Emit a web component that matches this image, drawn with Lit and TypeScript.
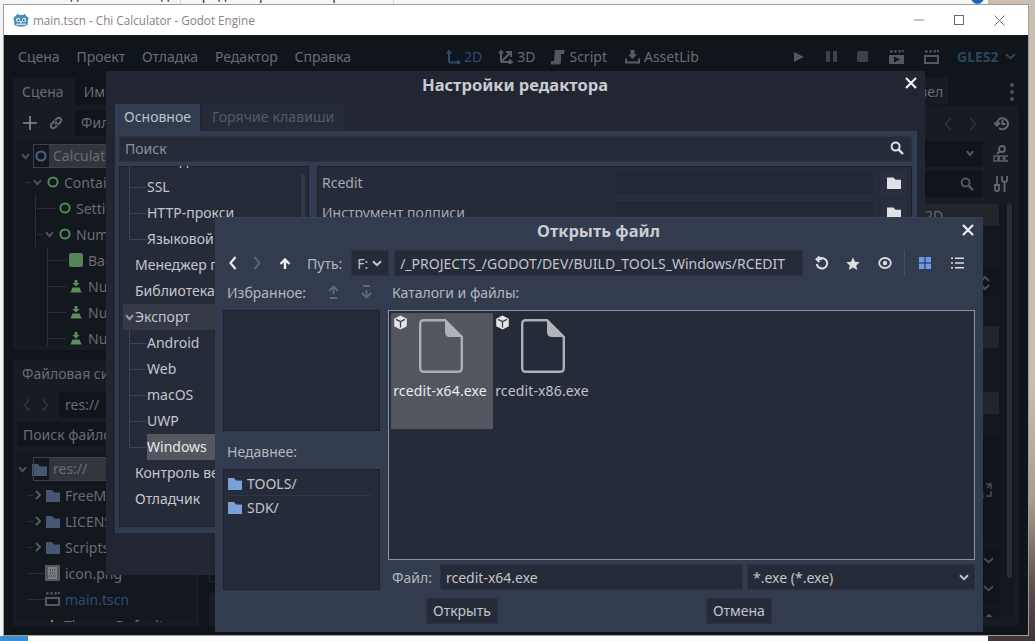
import { LitElement, html, css, svg } from "lit";
import { customElement } from "lit/decorators.js";

const icon = (w: number, h: number, body: unknown, cls = "") =>
  html`<svg class="ic ${cls}" width=${w} height=${h} viewBox="0 0 ${w} ${h}">${body}</svg>`;

const chev = (c: string, w = 10) =>
  icon(w, 7, svg`<path d="M1 1.2 L${w / 2} 5.2 L${w - 1} 1.2" fill="none" stroke=${c} stroke-width="2"/>`);
const chevUp = (c: string) =>
  icon(10, 7, svg`<path d="M1 5.8 L5 1.8 L9 5.8" fill="none" stroke=${c} stroke-width="2"/>`);
const angle = (dir: "l" | "r", c: string, sw = 2) =>
  icon(8, 14, svg`<path d=${dir === "l" ? "M6.5 1 L1.5 7 L6.5 13" : "M1.5 1 L6.5 7 L1.5 13"} fill="none" stroke=${c} stroke-width=${sw}/>`);
const tinyRight = (c: string) =>
  icon(6, 10, svg`<path d="M1 1 L5 5 L1 9" fill="none" stroke=${c} stroke-width="1.8"/>`);
const folder = (c: string) =>
  icon(14, 13, svg`<path d="M0 1 H6 L8 3.4 H14 V13 H0 Z" fill=${c}/>`);
const folderBtn = (c: string) =>
  icon(14, 12, svg`<path d="M0 .5 H6.5 L8.5 2.8 H14 V12 H0 Z" fill=${c}/>`);
const search = (c: string) =>
  icon(14, 14, svg`<circle cx="5.6" cy="5.6" r="4" fill="none" stroke=${c} stroke-width="2"/><path d="M8.6 8.6 L13 13" stroke=${c} stroke-width="2.4"/>`);
const ring = (c: string) =>
  icon(12, 12, svg`<circle cx="6" cy="6" r="4.6" fill="none" stroke=${c} stroke-width="2"/>`);
const instance = icon(12, 13, svg`<path d="M4.6 0 H7.4 V3 H9.6 L6 6.4 L2.4 3 H4.6 Z M2.5 7.5 H9.5 L11.6 12.5 H.4 Z" fill="#5c8f5e"/>`, "inst");
const greenSq = icon(14, 14, svg`<rect width="14" height="14" rx="2.5" fill="#568457"/>`, "sq");
const box = icon(15, 15, svg`<path d="M7.5 .6 L13.8 3.7 V11.2 L7.5 14.4 L1.2 11.2 V3.7 Z" fill="#e4e5e7"/><path d="M3 4.4 L7.5 6.6 L12 4.4 M7.5 6.6 V12.6" fill="none" stroke="#3a3d47" stroke-width="1.3"/>`);
const fileIc = icon(44, 54, svg`<path d="M4 1.2 H26 L42.8 18 V49 Q42.8 52.8 39 52.8 H5 Q1.2 52.8 1.2 49 V5 Q1.2 1.2 5 1.2 Z" fill="none" stroke="#aeb0b5" stroke-width="2.4"/><path d="M26 0 L44 18 H31 Q26 18 26 13 Z" fill="#b2b3b8"/>`);
const godot = icon(16, 15, svg`<path d="M3 2.5 L4.5 .8 L6 2 H10 L11.5 .8 L13 2.5 L15.6 5 L15 7.5 L14.6 12 Q8 15.5 1.4 12 L1 7.5 L.4 5 Z" fill="#478cbf"/><circle cx="5" cy="7" r="2" fill="#fff"/><circle cx="11" cy="7" r="2" fill="#fff"/><circle cx="5.2" cy="7.2" r="1" fill="#33505f"/><circle cx="10.8" cy="7.2" r="1" fill="#33505f"/><rect x="7.2" y="8" width="1.6" height="2" fill="#fff"/><path d="M3 11.2 H13" stroke="#fff" stroke-width="1"/>`);
const movie = (play: boolean) =>
  icon(15, 14, svg`<path d="M0 5 H15 V14 H0 Z" fill="#55575c"/><path d="M1 1.8 L3.6 1.2 M5.4 1.6 L7.6 1.2 M9.6 1.4 L11.8 1.2 M13 1 L14.8 .8" stroke="#55575c" stroke-width="2.4" />${play ? svg`<path d="M5 6.4 L11 9.5 L5 12.6 Z" fill="#10141b"/>` : svg`<rect x="2" y="7" width="11" height="5" fill="#10141b"/>`}`);

const sceneRows = [
  { t: "Calculator", d: 0, k: "root" },
  { t: "Container", d: 1, k: "g", arrow: true },
  { t: "SettingsBar", d: 2, k: "g" },
  { t: "NumPad", d: 2, k: "g", arrow: true },
  { t: "Background", d: 3, k: "sq" },
  { t: "NumButton", d: 3, k: "inst" },
  { t: "NumButton2", d: 3, k: "inst" },
  { t: "NumButton3", d: 3, k: "inst" },
];
const fsRows = [
  { t: "FreeMono", k: "dir" },
  { t: "LICENSES", k: "dir" },
  { t: "Scripts", k: "dir" },
  { t: "icon.png", k: "png" },
  { t: "main.tscn", k: "scn" },
  { t: "Theme_Default", k: "thm" },
];
const settingsRows = [
  { t: "Отладка", c: true },
  { t: "SSL", c: true },
  { t: "HTTP-прокси", c: true },
  { t: "Языковой сервер", c: true, last: true },
  { t: "Менеджер плагинов" },
  { t: "Библиотека ассетов" },
  { t: "Экспорт", open: true },
  { t: "Android", c: true },
  { t: "Web", c: true },
  { t: "macOS", c: true },
  { t: "UWP", c: true },
  { t: "Windows", c: true, sel: true, last: true },
  { t: "Контроль версий" },
  { t: "Отладчик" },
];

@customElement("app-root")
export class AppRoot extends LitElement {
  static styles = css`
    :host { display: block; width: 1035px; height: 641px; overflow: hidden; position: relative;
      font-family: "Noto Sans", "Open Sans", sans-serif; font-size: 14px; background: #fff; }
    .ic { display: block; flex: none; }
    .ic.sq { margin-left: -2px; }
    .ic.inst { margin-left: -1px; margin-right: 1px; }
    .desk { position: absolute; inset: 0; overflow: hidden; background: #f3f3f3; }
    .photo { position: absolute; left: 988px; top: 0; right: 0; bottom: 0;
      background: linear-gradient(180deg, #cbbfb2 0%, #c9bdb0 60%, #a99d92 78%, #5a4d4a 92%, #40333a 100%); }
    .ribbon { position: absolute; left: 0; top: 0; width: 988px; height: 4px; overflow: hidden; background: #f5f5f5;
      font: 14px "Open Sans", sans-serif; color: #222; }
    .ribbon span { position: absolute; top: -16px; white-space: nowrap; }
    .ribbon b { position: absolute; top: 0; width: 1px; height: 4px; background: #d4d4d4; }
    .help { position: absolute; left: 971px; top: -9px; width: 13px; height: 13px; border-radius: 50%; background: #1668c0; }
    .foot { position: absolute; left: 0; top: 635px; width: 988px; height: 6px; background: #fbfbfb; overflow: hidden; }
    .foot span { position: absolute; left: 84px; top: 1px; font: 13px "Open Sans", sans-serif; color: #222; }
    .foot i { position: absolute; left: 0; top: 1px; width: 28px; height: 5px; background: #3a8ed3; }
    .window { position: absolute; left: 4px; top: 5px; width: 1024px; height: 630px; display: flex; flex-direction: column;
      box-shadow: 0 0 0 1px #9c9c9c; }
    .titlebar { height: 30px; flex: none; background: #fff; display: flex; align-items: center; padding-left: 9px; gap: 4px;
      color: #8b8086; font: 11.7px "Open Sans", sans-serif; }
    .titlebar .spacer { flex: 1; }
    .wbtns { display: flex; align-items: center; gap: 30px; padding-right: 23px; }
    .editor { flex: 1; min-height: 0; display: flex; flex-direction: column; background: #10141b; color: #6a6c72; }
    .menu { height: 43px; flex: none; display: flex; align-items: center; padding-left: 14px; padding-top: 0; position: relative; }
    .menu .m { margin-right: 16.8px; }
    .menu .mid { position: absolute; left: 442px; top: 0; height: 43px; display: flex; align-items: center; gap: 16px; }
    .mid div { display: flex; align-items: center; gap: 4px; }
    .mid .al { margin-left: 2px; }
    .blue { color: #2d4a72; }
    .menu .run { position: absolute; left: 789px; top: 0; height: 43px; display: flex; align-items: center; gap: 20.5px; }
    .gles { position: absolute; left: 953px; top: 0; height: 43px; display: flex; align-items: center; gap: 6px; font-weight: 700; color: #2c485c; }
    .main { flex: 1; min-height: 0; display: flex; gap: 10px; padding: 0 10px 9px 9px; }
    .ldock { width: 186px; flex: none; display: flex; flex-direction: column; gap: 10px; }
    .dock { display: flex; flex-direction: column; min-height: 0; }
    .dock.top { height: 272px; flex: none; }
    .dock.low { flex: 1; background: #171b23; }
    .tabs { display: flex; height: 27px; flex: none; }
    .tab { padding: 0 9px; display: flex; align-items: center; }
    .tab.on { background: #171b23; padding-right: 11px; }
    .tabpanel { flex: 1; min-height: 0; background: #171b23; padding: 4px; display: flex; flex-direction: column; gap: 3px; overflow: hidden; }
    .tool { height: 27px; flex: none; display: flex; align-items: center; gap: 12px; padding-left: 6px; }
    .fld { background: #10141b; height: 26px; display: flex; align-items: center; padding: 0 6px; flex: 1; }
    .tree { flex: 1; min-height: 0; background: #13171e; overflow: hidden; padding-top: 3px; margin-top: 1px; }
    .row { height: 26px; display: flex; align-items: center; gap: 5px; position: relative; white-space: nowrap; }
    .row .txt { flex: 1; }
    .row.hl .txt { background: #32353b; height: 24px; line-height: 24px; padding-left: 4px; margin-left: -3px; }
    .row.hl::after { content: ""; position: absolute; left: 16px; right: 0; top: 1px; bottom: 1px; border: 1px solid #3f4147; pointer-events: none; }
    .arr { width: 10px; flex: none; display: flex; justify-content: center; }
    .arr.end { justify-content: flex-end; }
    .hline::before { content: ""; position: absolute; left: var(--lx); width: var(--lw); top: 13px; border-top: 1px solid #2b2e36; }
    .vline { position: absolute; left: var(--vx); top: 0; bottom: 0; border-left: 1px solid #2b2e36; }
    .lnk { color: #2f4d78; }
    .center { flex: 1; min-width: 0; display: flex; flex-direction: column; justify-content: flex-end; gap: 11px; }
    .center .a { height: 6px; border: 1px solid #25282f; }
    .center .b { height: 33px; background: #171b23; }
    .rdock { width: 218px; flex: none; display: flex; flex-direction: column; }
    .rtabs { height: 27px; display: flex; align-items: center; justify-content: space-between; flex: none; }
    .rtabs .t { margin-left: 112px; width: 36px; height: 27px; background: #171b23; line-height: 27px; }
    .dots { display: flex; flex-direction: column; gap: 3px; margin-right: 4px; }
    .dots i { width: 4px; height: 4px; border-radius: 50%; background: #4f5157; }
    .rpanel { flex: 1; min-height: 0; background: #171b23; display: flex; flex-direction: column; padding: 4px 4px 9px 0; margin-top: 1px; gap: 3px; }
    .rrow { height: 27px; flex: none; display: flex; align-items: center; }
    .rrow .box { flex: 1; height: 26px; background: #10141b; display: flex; align-items: center; justify-content: flex-end; padding-right: 9px; }
    .rrow .slot { width: 31px; padding-left: 5px; box-sizing: border-box; flex: none; display: flex; justify-content: center; }
    .rnav { justify-content: flex-end; gap: 17px; padding-right: 5px; }
    .insp { flex: 1; min-height: 0; margin-top: 4px; background: #13171e; display: flex; gap: 8px; padding-right: 2px; overflow: hidden; }
    .insp .list { flex: 1; display: flex; flex-direction: column; }
    .insp .sb { width: 5px; background: #2a2d34; border-radius: 3px; height: 374px; flex: none; }
    .ir { flex: none; display: flex; align-items: center; justify-content: flex-end; padding-right: 5px; }
    .ir.h22 { height: 22px; background: #22252b; padding-right: 0; justify-content: flex-start; padding-left: 125px; }
    .ir.dk { background: #10141b; }
    .ir.ud { height: 26px; margin-top: 44px; padding-right: 9px; }
    .ir.ex { height: 107px; margin-top: 22px; padding-right: 7px; }
    .ir.c1 { height: 26px; margin-top: 4px; }
    .ir.c2 { height: 28px; margin-top: 1px; }
    .ir.c3 { height: 14px; margin-top: 7px; }
    .mt30 { margin-top: 30px; }
    .mt44 { margin-top: 44px; }

    /* settings dialog */
    .settings { position: absolute; left: 106px; top: 71px; width: 819px; height: 504px; background: #222633;
      display: flex; flex-direction: column; padding: 0 8px 0 9px; box-sizing: border-box; color: #c4c6cb; }
    .dlgtitle { height: 33px; flex: none; display: flex; align-items: center; justify-content: center; font-weight: 700; font-size: 16.5px; color: #c9cbd0; position: relative; padding: 0 2px 7px 0; box-sizing: border-box; }
    .closer { position: absolute; }
    .c-s { right: 0; top: 6px; }
    .c-f { right: 1px; top: 6px; }
    .s-tabs { display: flex; gap: 2px; height: 27px; flex: none; }
    .s-tab { padding: 0 10px 2px; box-sizing: border-box; display: flex; align-items: center; background: #262b39; color: #565a65; letter-spacing: .1px; }
    .s-tab.on { background: #323c50; color: #bfc2c8; padding: 0 9px 2px; letter-spacing: 0; }
    .s-body { height: 402px; flex: none; background: #323c50; padding: 5px 5px 6px 4px; box-sizing: border-box; display: flex; flex-direction: column; gap: 4px; }
    .s-search { height: 26px; flex: none; background: #262b39; box-shadow: inset 0 0 0 1px #2c3242; display: flex; align-items: center; justify-content: space-between; padding: 0 8px 2px 6px; box-sizing: border-box; color: #8e9199; }
    .s-cols { flex: 1; min-height: 0; display: flex; gap: 8px; }
    .s-tree { width: 190px; flex: none; background: #262b39; box-shadow: inset 0 0 0 1px #1d212c; overflow: hidden; position: relative; }
    .s-tree .inner { margin-top: -18px; }
    .s-sb { position: absolute; left: 182px; top: 8px; width: 4px; height: 190px; background: #333847; border-radius: 2px; }
    .s-row { height: 26px; display: flex; align-items: center; position: relative; padding-left: 16px; white-space: nowrap; }
    .s-row.c { padding-left: 28px; }
    .s-row.c::before { content: ""; position: absolute; left: 10px; width: 17px; top: 13px; border-top: 1px solid #3d4352; }
    .s-row.c::after { content: ""; position: absolute; left: 10px; top: 0; height: 100%; border-left: 1px solid #3d4352; }
    .s-row.last::after { height: 14px; }
    .s-row.open { background: #343945; margin-left: 4px; padding-left: 12px; }
    .s-row.open .ic { position: absolute; left: 2px; top: 10px; }
    .s-row .lab { height: 26px; line-height: 26px; flex: 1; }
    .s-row.sel .lab { background: #54575f; color: #e6e7ea; }
    .s-props { flex: 1; min-width: 0; background: #262b39; box-shadow: inset 0 0 0 1px #1d212c; padding: 3px 5px 4px; display: flex; flex-direction: column; gap: 4px; }
    .s-prop { height: 26px; display: flex; align-items: center; color: #a6a9b0; gap: 6px; }
    .s-prop .name { flex: 1; white-space: nowrap; }
    .s-prop .val { width: 260px; height: 26px; margin-top: 2px; background: #232836; box-shadow: inset 0 0 0 1px #2a2f3d; }
    .s-prop .btn { width: 26px; height: 26px; margin-top: 2px; background: #2a2f3d; display: flex; align-items: center; justify-content: center; }

    /* file dialog */
    .filedlg { position: absolute; left: 215px; top: 218px; width: 768px; height: 414px; background: #333c4f; color: #b4b7bd;
      display: flex; flex-direction: column; padding: 0 8px; box-sizing: border-box; box-shadow: 0 -1px 0 #3a4356; }
    .f-title { height: 27px; flex: none; display: flex; align-items: center; justify-content: center; font-weight: 700; font-size: 16.5px; color: #c9ccd2; position: relative; padding: 0 1px 3px 0; box-sizing: border-box; }
    .f-bar { margin-top: 5px; height: 26px; flex: none; display: flex; align-items: center; }
    .f-bar .nav { width: 24px; display: flex; justify-content: center; }
    .f-bar .nav.back { margin-left: -2px; }
    .f-bar .nav.up { margin: 0 10px 0 4px; }
    .f-path { margin-right: 9px; }
    .f-in { background: #262b39; box-shadow: inset 0 0 0 1px #2c3242; height: 26px; display: flex; align-items: center; padding: 0 6px; box-sizing: border-box; color: #c3c5ca; white-space: nowrap; overflow: hidden; }
    .f-in.drive { width: 38px; padding: 0 0 0 6px; gap: 4px; }
    .f-in.path { width: 409px; margin-left: 5px; }
    .f-bar .tb { width: 32px; display: flex; justify-content: center; }
    .f-bar .tb.refresh { margin-left: 2px; }
    .sep { width: 1px; height: 26px; background: #465065; margin: 0 4px 0 3px; }
    .f-cols { flex: 1; min-height: 0; display: flex; gap: 8px; margin-top: 5px; }
    .f-left { width: 157px; flex: none; display: flex; flex-direction: column; }
    .f-lab { height: 29px; flex: none; display: flex; align-items: center; padding: 0 0 7px 4px; box-sizing: border-box; }
    .f-list { background: #262b39; box-shadow: inset 0 0 0 1px #1d212c; box-sizing: border-box; }
    .fav { height: 121px; flex: none; }
    .rec { height: 121px; flex: none; padding: 2px 8px 0 5px; color: #c3c5ca; }
    .rec .r { height: 24px; box-sizing: border-box; display: flex; align-items: center; gap: 5px; }
    .rec .r + .r { border-top: 1px solid #30364a; }
    .lab2 { height: 38px; flex: none; display: flex; align-items: flex-end; padding: 0 0 8px 4px; box-sizing: border-box; }
    .f-right { flex: 1; min-width: 0; display: flex; flex-direction: column; }
    .f-favlab { flex: 1; }
    .f-ups { display: flex; gap: 22px; padding-right: 8px; align-items: center; }
    .f-files { height: 250px; flex: none; background: #262b39; box-shadow: inset 0 0 0 1px #8d93a0; padding: 3px; box-sizing: border-box; display: flex; align-items: flex-start; }
    .item { width: 102px; height: 116px; position: relative; display: flex; flex-direction: column; align-items: center; flex: none; color: #c3c5ca; }
    .item.sel { background: #53565f; color: #eceded; }
    .item .b { position: absolute; left: 2px; top: 2px; }
    .item .f { margin-top: 6px; margin-left: -2px; }
    .item .n { margin-top: 8px; margin-left: -4px; white-space: nowrap; line-height: 20px; letter-spacing: .14px; }
    .f-file { height: 26px; flex: none; margin-top: 4px; display: flex; align-items: center; gap: 4px; }
    .f-file .l { width: 48px; padding-left: 4px; box-sizing: border-box; }
    .f-file .name { flex: 1; }
    .f-file .sel2 { width: 228px; justify-content: space-between; }
    .f-btns { height: 42px; flex: none; display: flex; align-items: flex-start; padding: 8px 0 0 211px; gap: 208px; box-sizing: border-box; margin: 0 -8px; }
    .fb { height: 26px; display: flex; align-items: center; padding: 0 7px 2px; box-sizing: border-box; background: #262b39; box-shadow: inset 0 0 0 1px #2c3242; color: #c3c5ca; }
    .search2 { flex: none; height: 24px; margin-top: 1px; }
    .fstool { gap: 10px; }
    .fstree { margin-top: 4px; }
  `;

  private sceneRow(r: any) {
    const base = 3 + r.d * 12;
    return html`<div class="row ${r.k === "root" ? "hl" : ""} ${r.d ? "hline" : ""}"
        style="padding-left:${base}px;--lx:${base - 7}px;--lw:${r.arrow ? 6 : 18}px">
      ${r.d >= 2 ? html`<span class="vline" style="--vx:${r.d === 2 ? 18 : 30}px"></span>` : ""}
      <span class="arr">${r.k === "root" || r.arrow ? chev("#4f5157", 9) : ""}</span>
      ${r.k === "root" ? ring("#4f608f") : r.k === "g" ? ring("#4f8a55") : r.k === "sq" ? greenSq : r.k === "inst" ? instance : ""}
      <span class="txt">${r.t}</span>
    </div>`;
  }

  private fsIcon(k: string) {
    if (k === "dir") return folder("#475672");
    if (k === "png") return icon(15, 16, svg`<rect width="15" height="16" fill="#55575a"/><rect x="3" y="2" width="9" height="12" fill="#7c7d80"/><path d="M5 5h5M5 8h5M4 11h7" stroke="#333" stroke-width="1" stroke-dasharray="1 1"/>`);
    if (k === "scn") return movie(false);
    return icon(14, 14, svg`<path d="M7 1 L13 13 H1 Z" fill="#a98a3a"/>`);
  }

  private editor() {
    return html`<div class="editor">
      <div class="menu">
        ${["Сцена", "Проект", "Отладка", "Редактор", "Справка"].map((m) => html`<span class="m">${m}</span>`)}
        <div class="mid">
          <div class="blue">${icon(14, 14, svg`<path d="M3 12.5 V2 M3 12.5 H13 M1 3.5 L3 1 L5 3.5 M11.5 10.5 L14 12.5 L11.5 14.5" fill="none" stroke="#2d4a72" stroke-width="2"/>`)}<span>2D</span></div>
          <div>${icon(15, 14, svg`<path d="M3 12 V3 M3 12 H13 M3 12 L12 3 M1 3.5 L3 1 L5 3.5 M11 9.5 L14 12 L11 14 M8 2 H13 V7" fill="none" stroke="#5a5c61" stroke-width="2"/>`)}<span>3D</span></div>
          <div>${icon(14, 16, svg`<path d="M4 1 H14 L13 5 H10 V13 Q10 15.5 7 15.5 H0 V12 H3 Z" fill="#55575c"/>`)}<span>Script</span></div>
          <div class="al">${icon(15, 15, svg`<path d="M5.5 1 H9.5 V5.5 H12 L7.5 10 L3 5.5 H5.5 Z" fill="#5a5c61"/><path d="M1 9.5 V13.5 H14 V9.5" fill="none" stroke="#5a5c61" stroke-width="2"/>`)}<span>AssetLib</span></div>
        </div>
        <div class="run">
          ${icon(12, 12, svg`<path d="M1 1 L11 6 L1 11 Z" fill="#55575c"/>`)}
          ${icon(11, 11, svg`<rect width="4" height="11" rx="1" fill="#3f4146"/><rect x="7" width="4" height="11" rx="1" fill="#3f4146"/>`)}
          ${icon(11, 11, svg`<rect width="11" height="11" rx="1.5" fill="#3f4146"/>`)}
          ${movie(true)}${movie(false)}
        </div>
        <div class="gles"><span>GLES2</span>${chev("#2c485c", 11)}</div>
      </div>
      <div class="main">
        <div class="ldock">
          <div class="dock top">
            <div class="tabs"><div class="tab on">Сцена</div><div class="tab">Импорт</div></div>
            <div class="tabpanel">
              <div class="tool">
                ${icon(14, 14, svg`<path d="M7 0 V14 M0 7 H14" stroke="#8a8c91" stroke-width="1.6"/>`)}
                ${icon(14, 14, svg`<path d="M6 8 L8 6 M5.5 5 L2.5 8 Q1 10 2.5 11.5 Q4 13 6 11.5 L8 9.5 M8.5 9 L11.5 6 Q13 4 11.5 2.5 Q10 1 8 2.5 L6 4.5" fill="none" stroke="#66686d" stroke-width="2"/>`)}
                <div class="fld">Фильтр узлов</div>
              </div>
              <div class="tree">${sceneRows.map((r) => this.sceneRow(r))}</div>
            </div>
          </div>
          <div class="dock low">
            <div class="tabs"><div class="tab">Файловая система</div></div>
            <div class="tabpanel">
              <div class="tool fstool">
                ${angle("l", "#33363c", 1.5)}${angle("r", "#33363c", 1.5)}<div class="fld">res://</div>
              </div>
              <div class="fld search2">Поиск файлов</div>
              <div class="tree fstree">
                <div class="row hl" style="padding-left:0">
                  <span class="arr">${chev("#4f5157", 9)}</span>${icon(15, 13, svg`<path d="M0 1 H6 L8 3.4 H15 V13 H0 Z" fill="#475672"/>`)}
                  <span class="txt">res://</span>
                </div>
                ${fsRows.map((r) => html`<div class="row hline" style="padding-left:${r.k === "dir" ? 14 : 28}px;--lx:10px;--lw:${r.k === "dir" ? 6 : 18}px">
                  ${r.k === "dir" ? html`<span class="arr end">${tinyRight("#5a5c61")}</span>` : ""}
                  ${this.fsIcon(r.k)}<span class="txt ${r.k === "scn" ? "lnk" : ""}">${r.t}</span>
                </div>`)}
              </div>
            </div>
          </div>
        </div>
        <div class="center"><div class="a"></div><div class="b"></div></div>
        <div class="rdock">
          <div class="rtabs"><span class="t">Узел</span><span class="dots"><i></i><i></i><i></i></span></div>
          <div class="rpanel">
            <div class="rrow rnav">
              ${angle("l", "#33363c", 1.5)}${angle("r", "#33363c", 1.5)}
              ${icon(15, 15, svg`<path d="M3 7.5 A5.5 5.5 0 1 1 5 12 M6 6.5 L3 9.5 L0 6.5 M8.5 4 V8 H11.5" fill="none" stroke="#66686d" stroke-width="2"/>`)}
            </div>
            <div class="rrow"><div class="box">${chev("#55575c", 8)}</div><div class="slot">${icon(16, 17, svg`<circle cx="9" cy="4" r="3" fill="none" stroke="#66686d" stroke-width="1.8"/><path d="M6.5 6.5 L4 9" stroke="#66686d" stroke-width="1.8"/><rect x="1" y="11" width="4" height="5" fill="none" stroke="#66686d" stroke-width="1.3"/><rect x="6.3" y="11" width="4" height="5" fill="none" stroke="#66686d" stroke-width="1.3"/><path d="M15 11 H12 V16 H15" fill="none" stroke="#66686d" stroke-width="1.3"/>`)}</div></div>
            <div class="rrow"><div class="box">${search("#55575c")}</div><div class="slot">${icon(14, 16, svg`<path d="M3 0 V9 M1 9 H5 V14 Q3 16.5 1 14 Z M8 0 V4 Q8 6 10.5 6 Q13 6 13 4 V0 M10.5 6 V16" fill="none" stroke="#66686d" stroke-width="1.8"/>`)}</div></div>
            <div class="insp">
              <div class="list">
                <div class="ir h22">2D</div>
                <div class="ir dk ud">${icon(10, 16, svg`<path d="M1 6 L5 2 L9 6 M1 10 L5 14 L9 10" fill="none" stroke="#4a4c51" stroke-width="2"/>`)}</div>
                <div class="ir h22 mt30"></div>
                <div class="ir h22 mt44"></div>
                <div class="ir dk ex">${icon(14, 14, svg`<path d="M8 1 H13 V6 M13 1 L9 5 M1 8 V13 H6 M1 13 L5 9 M8 13 H13 V8" fill="none" stroke="#4a4c51" stroke-width="1.6"/>`)}</div>
                <div class="ir dk c1">${chev("#4a4c51", 11)}</div>
                <div class="ir dk c2">${chev("#4a4c51", 11)}</div>
                <div class="ir dk c3">${chevUp("#4a4c51")}</div>
              </div>
              <div class="sb"></div>
            </div>
          </div>
        </div>
      </div>
    </div>`;
  }

  private settings() {
    return html`<div class="settings">
      <div class="dlgtitle">Настройки редактора
        <span class="closer c-s">${icon(12, 12, svg`<path d="M1 1 L11 11 M11 1 L1 11" stroke="#f0f0f2" stroke-width="2.2"/>`)}</span>
      </div>
      <div class="s-tabs"><div class="s-tab on">Основное</div><div class="s-tab">Горячие клавиши</div></div>
      <div class="s-body">
        <div class="s-search"><span>Поиск</span>${search("#dfe0e3")}</div>
        <div class="s-cols">
          <div class="s-tree">
            <div class="inner">
              ${settingsRows.map((r: any) => html`<div class="s-row ${r.c ? "c" : ""} ${r.last ? "last" : ""} ${r.open ? "open" : ""} ${r.sel ? "sel" : ""}">
                ${r.open ? chev("#9a9da5", 9) : ""}<span class="lab">${r.t}</span>
              </div>`)}
            </div>
            <div class="s-sb"></div>
          </div>
          <div class="s-props">
            ${["Rcedit", "Инструмент подписи"].map((n) => html`<div class="s-prop">
              <span class="name">${n}</span><span class="val"></span>
              <span class="btn">${folderBtn("#e0e1e4")}</span>
            </div>`)}
          </div>
        </div>
      </div>
    </div>`;
  }

  private fileDialog() {
    const tbc = "#dcdde0";
    return html`<div class="filedlg">
      <div class="f-title">Открыть файл
        <span class="closer c-f">${icon(12, 12, svg`<path d="M1 1 L11 11 M11 1 L1 11" stroke="#eceef0" stroke-width="2.2"/>`)}</span>
      </div>
      <div class="f-bar">
        <span class="nav back">${angle("l", "#e6e7e9", 2.2)}</span>
        <span class="nav">${angle("r", "#5c6272", 2)}</span>
        <span class="nav up">${icon(12, 11, svg`<path d="M6 11 V3 M1.5 6 L6 1.5 L10.5 6" fill="none" stroke="#eceef0" stroke-width="2.4"/>`)}</span>
        <span class="f-path">Путь:</span>
        <span class="f-in drive">F:${chev("#c3c5ca", 10)}</span>
        <span class="f-in path">/_PROJECTS_/GODOT/DEV/BUILD_TOOLS_Windows/RCEDIT</span>
        <span class="tb refresh">${icon(15, 14, svg`<path d="M2.8 8 A5.2 5.2 0 1 0 5 3 H8 M5.5 .5 L2.5 3.2 L5.5 6" fill="none" stroke=${tbc} stroke-width="2"/>`)}</span>
        <span class="tb">${icon(14, 13, svg`<path d="M7 .3 L9 4.7 L13.8 5.2 L10.2 8.4 L11.2 13 L7 10.6 L2.8 13 L3.8 8.4 L.2 5.2 L5 4.7 Z" fill=${tbc}/>`)}</span>
        <span class="tb">${icon(14, 12, svg`<ellipse cx="7" cy="6" rx="5.8" ry="5" fill="none" stroke=${tbc} stroke-width="1.8"/><circle cx="7" cy="6" r="2.2" fill=${tbc}/>`)}</span>
        <span class="sep"></span>
        <span class="tb">${icon(12, 12, svg`<rect width="5.4" height="5.4" fill="#6a9ae8"/><rect x="6.6" width="5.4" height="5.4" fill="#6a9ae8"/><rect y="6.6" width="5.4" height="5.4" fill="#6a9ae8"/><rect x="6.6" y="6.6" width="5.4" height="5.4" fill="#6a9ae8"/>`)}</span>
        <span class="tb">${icon(13, 12, svg`<path d="M0 1.2 H2 M4 1.2 H13 M0 6 H2 M4 6 H13 M0 10.8 H2 M4 10.8 H13" stroke=${tbc} stroke-width="1.6"/>`)}</span>
      </div>
      <div class="f-cols">
        <div class="f-left">
          <div class="f-lab"><span class="f-favlab">Избранное:</span>
            <span class="f-ups">
              ${icon(11, 14, svg`<path d="M5.5 9 V2 M1 6 L5.5 1.5 L10 6 M2 13 H9" fill="none" stroke="#626878" stroke-width="1.8"/>`)}
              ${icon(11, 14, svg`<path d="M5.5 5 V12 M1 8 L5.5 12.5 L10 8 M2 1 H9" fill="none" stroke="#626878" stroke-width="1.8"/>`)}
            </span>
          </div>
          <div class="f-list fav"></div>
          <div class="lab2">Недавнее:</div>
          <div class="f-list rec">
            <div class="r">${folder("#7ba0d8")}TOOLS/</div>
            <div class="r">${folder("#7ba0d8")}SDK/</div>
          </div>
        </div>
        <div class="f-right">
          <div class="f-lab">Каталоги и файлы:</div>
          <div class="f-files">
            <div class="item sel"><span class="b">${box}</span><span class="f">${fileIc}</span><span class="n">rcedit-x64.exe</span></div>
            <div class="item"><span class="b">${box}</span><span class="f">${fileIc}</span><span class="n">rcedit-x86.exe</span></div>
          </div>
          <div class="f-file">
            <span class="l">Файл:</span>
            <span class="f-in name">rcedit-x64.exe</span>
            <span class="f-in sel2">*.exe (*.exe)${chev("#c3c5ca", 10)}</span>
          </div>
        </div>
      </div>
      <div class="f-btns"><span class="fb">Открыть</span><span class="fb">Отмена</span></div>
    </div>`;
  }

  render() {
    return html`<div class="desk">
      <div class="photo"></div>
      <div class="ribbon">
        <span style="left:-4px">Главная</span><span style="left:52px">Поделиться</span>
        <span style="left:143px">Вид</span><span style="left:193px">Средства работы с приложениями</span>
        <b style="left:180px"></b><b style="left:393px"></b>
        <i class="help"></i>
      </div>
      <div class="foot"><i></i><span>Приложение</span></div>
      <div class="window">
        <div class="titlebar">
          ${godot}<span>main.tscn - Chi Calculator - Godot Engine</span><span class="spacer"></span>
          <div class="wbtns">
            ${icon(10, 10, svg`<path d="M0 5 H10" stroke="#8a8a8a" stroke-width="1"/>`)}
            ${icon(10, 10, svg`<rect x=".5" y=".5" width="9" height="9" fill="none" stroke="#6a6a6a" stroke-width="1"/>`)}
            ${icon(11, 11, svg`<path d="M.5 .5 L10.5 10.5 M10.5 .5 L.5 10.5" stroke="#6a6a6a" stroke-width="1"/>`)}
          </div>
        </div>
        ${this.editor()}
      </div>
      ${this.settings()}
      ${this.fileDialog()}
    </div>`;
  }
}
